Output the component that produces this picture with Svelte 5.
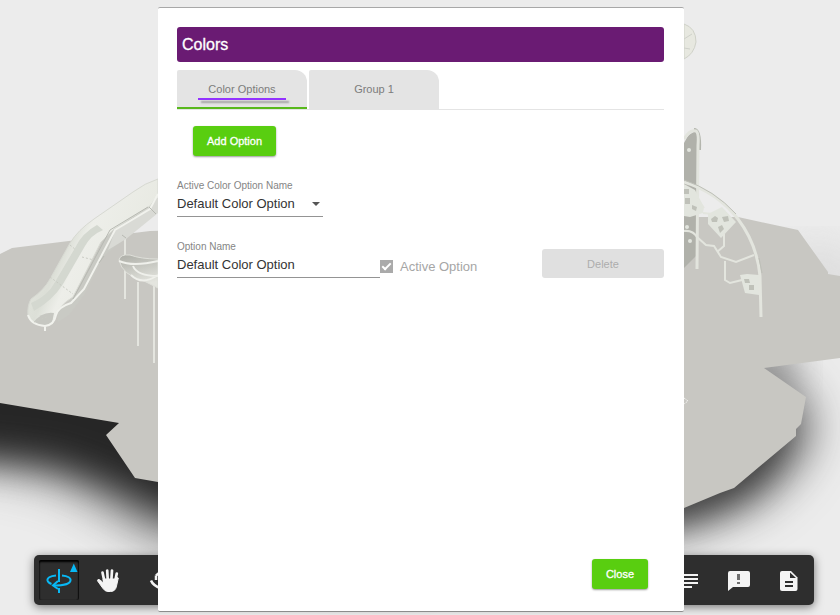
<script>
  let tab = $state('options');
  let active = $state('Default Color Option');
  let optionName = $state('Default Color Option');
  const tabs = [
    { id: 'options', label: 'Color Options' },
    { id: 'group1', label: 'Group 1' }
  ];
</script>

<main>
  <svg class="scene" viewBox="0 0 840 615" preserveAspectRatio="xMidYMid slice" aria-hidden="true">
    <defs>
      <filter id="soft" color-interpolation-filters="sRGB" x="-40%" y="-60%" width="180%" height="220%"><feGaussianBlur stdDeviation="18" /></filter>
      <filter id="softer" color-interpolation-filters="sRGB" x="-60%" y="-60%" width="220%" height="220%"><feGaussianBlur stdDeviation="24" /></filter>
      <linearGradient id="slide" x1="0" y1="0" x2="1" y2="0.5">
        <stop offset="0.15" stop-color="#e6e8e1" /><stop offset="0.42" stop-color="#dcdfd7" />
        <stop offset="0.52" stop-color="#edeee9" /><stop offset="1" stop-color="#e6e8e0" />
      </linearGradient>
      <linearGradient id="cup" x1="0" y1="0" x2="0.3" y2="1">
        <stop offset="0" stop-color="#adaea7" /><stop offset="1" stop-color="#e4e5df" />
      </linearGradient>
    </defs>
    <rect width="840" height="615" fill="#ececec" />
    <path filter="url(#softer)" fill="#555" opacity="0.6" d="M-80 320 L120 360 L420 450 L420 570 L160 546 Q110 512 60 484 L0 470 L-80 460Z" />
    <path filter="url(#soft)" fill="#262626" d="M-80 320 L120 360 L420 450 L420 530 L160 512 Q110 482 50 464 L0 458 L-80 452Z" />
    <path filter="url(#softer)" fill="#333" d="M400 450 L690 440 L735 415 L775 380 L808 415 Q805 465 745 502 L680 526 L400 540Z" />
    <path filter="url(#soft)" fill="#444" opacity="0.8" d="M400 460 L690 450 L735 425 L760 420 L770 450 Q755 480 730 495 L680 515 L400 525Z" />
    <path filter="url(#soft)" fill="#555" opacity="0.6" d="M725 340 L790 350 L795 385 L745 395Z" />
    <path filter="url(#softer)" fill="#ccc" d="M790 250 L860 270 L860 290 L800 290Z" />
    <path fill="#c8c7c2" d="M0 254 L12 248 L150 231 L684 217 L738 217 L798 230 L828 272 L828 274 L840 276 L840 358 L764 368 L806 397 L801 424 L796 429 L796 436 L734 488 L720 493 L684 508 L158 482 L135 478 L106 435 L119 423 L0 403Z" />

    <g fill="none" stroke="#e4e5df" stroke-width="2">
      <path d="M125 235V299M138 282V346M154 278V363" />
    </g>
    <path fill="#c9cac4" d="M158 194 L153 211 L124 239 L103 257 L84 295 L69 315 L58 322 L57 312 L75 296 L107 234 L135 212Z" />
    <path fill="#d9dad5" d="M115 231 L152 205 L158 197 V213 L126 239 L108 250Z" />
    <path fill="url(#slide)" stroke="#d7d9d2" d="M158 179 Q145 183 133 192 L94 219 Q78 230 70 243 L50 279 Q44 290 31 299 Q27 306 28 316 Q34 325 45 326 L53 323 Q57 306 73 297 Q87 270 101 242 L114 229 L150 206 L158 195Z" />
    <path fill="#d4d8d0" d="M97 225 Q82 233 75 248 L55 282 Q48 296 31 303 L34 311 Q53 300 63 284 L85 246 Q91 235 103 230Z" />
    <path fill="#c6c7c1" d="M33 323 Q42 311 54 313 L52 323 L45 326Z" />
    <path fill="none" stroke="#f1f2ed" stroke-width="2" d="M28 315 Q31 325 45 326 Q54 325 56 315 Q58 307 71 303 L84 289 L115 230 L150 209 L158 194M45 326V331" />
    <path fill="none" stroke="#b7b9b2" stroke-width="1" d="M73 299 L110 230 L148 207M99 263l5-7M122 235l4 3M149 207l7 7" />
    <path fill="none" stroke="#c9cbc3" stroke-width="1" stroke-dasharray="2 2" d="M70 245 L76 250M82 257L94 260M50 277L73 294M34 322L49 316" />
    <path fill="url(#cup)" stroke="#dfe0da" d="M119 260 Q120 254 130 255 Q141 259 158 259 V288 L144 281 Q122 275 119 260Z" />
    <path fill="none" stroke="#eff0eb" stroke-width="2" d="M119 261 Q133 267 158 261M133 266 Q137 276 158 276M131 275 Q142 286 158 275" />

    <path fill="#e7e8e0" stroke="#cfd1c8" d="M684 24 Q696 28 696 42 Q694 54 684 59Z" />
    <path stroke="#cfd1ca" fill="none" d="M684 39l8-5M684 48l6 1" />
    <path fill="#b0b1aa" d="M684 143 Q689 132 697 131 L697 255 L684 268Z" />
    <path fill="none" stroke="#b4b6ae" stroke-width="2" d="M694 129 Q701 129 700 150" />
    <path fill="none" stroke="#e2e4dd" stroke-width="3" d="M684 139 Q690 129 696 131 Q699 133 698 145 L697 269" />
    <g fill="#e2e5de">
      <circle cx="689" cy="150" r="2" /><circle cx="687" cy="227" r="2" /><circle cx="690" cy="241" r="2" />
      <path d="M684 184 L695 190 L704 207 L703 213 L690 217 L684 216Z" />
      <path d="M708 214 L722 207 L736 222 L721 238 L708 224Z" />
      <path d="M740 275 L747 274 L759 275 L759 295 L745 293Z" />
    </g>
    <g fill="#bfc1b9">
      <path d="M684 189h5v5h-5zM685 198h5v6h-5zM692 205l5 2-1 4-4-2zM711 219l4-3 3 2-1 4h-5zM722 217l6-1 1 5-5 1zM718 227l4-2 2 4-4 4zM744 279h5l1 4h-5zM749 285h5v5h-5z" />
    </g>
    <g fill="none" stroke="#e3e5de">
      <path stroke-width="2" d="M684 231 Q693 230 697 237 L706 245 L714 246 L721 257 L736 262 L754 255M717 252 L724 246V234M725 261V280L730 283L742 280M697 199L704 208M703 213L712 214" />
      <path stroke-width="3" d="M684 182 Q717 192 738 219 Q757 244 760 276 L761 317" />
    </g>
    <path fill="none" stroke="#bdbfb7" d="M684 180 Q714 190 736 214M759 258l3 15" />
    <path fill="none" stroke="#f2f2ef" stroke-dasharray="2 1" d="M684 398l4 3-4 3" />
  </svg>

  <div class="toolbar" role="toolbar" aria-label="View tools">
    <div class="tools">
      <button class="tool pressed" aria-label="Orbit" aria-pressed="true">
        <svg width="40" height="40" viewBox="0 0 40 40" fill="none" stroke="#08b8f5" stroke-width="2">
          <path d="M20 9V22M20 28V33" />
          <path d="M17 15.5C11 16 8 18 8.5 20.5C9 22.5 11 23.5 12.5 24M23 15.5C29 16 32 18 31.5 20.5C31 24 24 25.5 15 25.5" />
          <path d="M19 21L14 25.5L19 29" />
          <path d="M31 12H38.500L34.800 3.500Z" fill="#08b8f5" stroke="none" />
        </svg>
      </button>
      <button class="tool" aria-label="Pan">
        <svg width="40" height="40" viewBox="0 0 40 40" fill="none" stroke="#f4f4f4" stroke-linecap="round" stroke-linejoin="round">
          <path stroke-width="2.7" d="M15.5 22L13.500 12.500M18.800 21L18.200 10.500M22.300 21L23 10.500M26 22L27.800 13.500" />
          <path fill="#f4f4f4" stroke-width="1" d="M14.500 19H27L28.200 17.500L29.300 18L27.500 26Q26.500 31.500 21.500 31.500H19Q16 31.500 14 28.500L8.500 20.800Q8.500 19.200 10 19.500Q11.500 20 14.500 23Z" />
        </svg>
      </button>
      <button class="tool" aria-label="Rotate">
        <svg width="40" height="40" viewBox="0 0 40 40" fill="none" stroke="#f4f4f4" stroke-width="2.500">
          <path d="M22 11.500L17 15.500M17 15.500V20M12 20.500Q14 25.500 22 28.500" />
        </svg>
      </button>
    </div>
    <div class="tools">
      <button class="tool" aria-label="Parts list">
        <svg width="40" height="40" viewBox="0 0 40 40" fill="#f4f4f4">
          <path d="M10 14H29V16H10ZM10 18H29V20H10ZM10 22H29V24H10ZM10 26H23V28H10Z" />
        </svg>
      </button>
      <button class="tool" aria-label="Messages">
        <svg width="40" height="40" viewBox="0 0 40 40">
          <path fill="#f4f4f4" d="M11 11H29Q31 11 31 13V25Q31 27 29 27H14L9 31V13Q9 11 11 11Z" />
          <path fill="#6f6f6f" d="M18 14H21V20H18ZM18 22H21V24H18Z" />
        </svg>
      </button>
      <button class="tool" aria-label="Document">
        <svg width="40" height="40" viewBox="0 0 40 40">
          <path fill="#f4f4f4" d="M13 11H22L28.500 17.500V29Q28.500 31 26.500 31H13Q11 31 11 29V13Q11 11 13 11Z" />
          <path fill="#2e2e2e" d="M21 12.500V18H27ZM16 21H24V23H16ZM16 25H24V27H16Z" />
        </svg>
      </button>
    </div>
  </div>

  <div class="dialog" role="dialog" aria-labelledby="title">
    <h1 id="title">Colors</h1>
    <div class="tabs" role="tablist">
      {#each tabs as t}
        <button class="tab" class:selected={tab === t.id} role="tab" aria-selected={tab === t.id} onclick={() => (tab = t.id)}>
          <span>{t.label}</span>
        </button>
      {/each}
    </div>
    <button class="btn add">Add Option</button>

    <div class="field picker">
      <label for="active-name">Active Color Option Name</label>
      <div class="select">
        <select id="active-name" bind:value={active}>
          <option>Default Color Option</option>
        </select>
        <svg width="8" height="4" viewBox="0 0 8 4" aria-hidden="true"><path fill="#555" d="M0 0H8L4 4Z" /></svg>
      </div>
    </div>

    <div class="row">
      <div class="field name">
        <label for="option-name">Option Name</label>
        <input id="option-name" type="text" bind:value={optionName} />
      </div>
      <label class="check">
        <input type="checkbox" checked disabled />
        Active Option
      </label>
      <button class="btn delete" disabled>Delete</button>
    </div>

    <div class="actions"><button class="btn">Close</button></div>
  </div>
</main>

<style>
  :global(body) { margin: 0; }
  main, button, input, select { font-family: "Liberation Sans", Arial, sans-serif; }
  main {
    position: relative;
    box-sizing: border-box;
    min-height: 100vh;
    padding: 7px 0 3px 2px;
    display: flex;
    justify-content: center;
    overflow: hidden;
    background: #ececec;
  }
  button { border: 0; padding: 0; cursor: pointer; }
  .scene { position: absolute; inset: 0; width: 100%; height: 100%; }
  .toolbar {
    position: absolute;
    left: 34px;
    right: 26px;
    bottom: 10px;
    box-sizing: border-box;
    height: 50px;
    padding: 5px;
    display: flex;
    justify-content: space-between;
    border-radius: 5px;
    background: #2e2e2e;
    box-shadow: 0 2px 10px rgba(0, 0, 0, 0.5);
  }
  .tools { display: flex; gap: 10px; }
  .tool { width: 40px; height: 40px; background: none; border-radius: 2px; }
  .tool svg { display: block; }
  .pressed { box-shadow: inset 0 2px 2px #000, inset -1px 0 1px #161616, inset 1px 0 1px #222; }

  .dialog {
    position: relative;
    box-sizing: border-box;
    width: 526px;
    max-width: 100%;
    padding: 19px 20px 22px 19px;
    display: flex;
    flex-direction: column;
    border-top: 1px solid #a8a8a8;
    border-bottom: 1px solid #8c8c8c;
    border-radius: 2px;
    background: #fff;
  }
  h1 {
    margin: 0 0 8px;
    padding: 1px 5px 0;
    border-radius: 3px;
    background: #6a1b73;
    color: #fff;
    font-size: 16px;
    font-weight: 400;
    line-height: 34px;
    -webkit-text-stroke: 0.3px currentColor;
  }
  .tabs { display: flex; gap: 2px; border-bottom: 1px solid #e4e4e4; }
  .tab {
    width: 130px;
    height: 39px;
    box-sizing: border-box;
    border-bottom: 2px solid #e4e4e4;
    border-radius: 2px 12px 0 0;
    background: #e4e4e4;
    color: #7c7c7c;
    font-size: 11px;
    line-height: 16px;
  }
  .tab span { position: relative; }
  .selected { border-bottom-color: #58b81c; }
  .selected span::after {
    content: "";
    position: absolute;
    left: -10px;
    right: -10px;
    bottom: -5px;
    height: 2px;
    background: #9333ff;
    box-shadow: 3px 3px 2px rgba(0, 0, 0, 0.3);
  }
  .btn {
    height: 30px;
    padding: 0 14px;
    border-radius: 3px;
    background: #59ce10;
    color: #fff;
    font-size: 11px;
    -webkit-text-stroke: 0.3px currentColor;
    box-shadow: 0 1px 2px rgba(0, 0, 0, 0.4);
  }
  .add { align-self: flex-start; margin: 16px 0 24px 16px; }
  .field { display: flex; flex-direction: column; }
  .field label { color: #858585; font-size: 10px; line-height: 12px; }
  .field input, select {
    box-sizing: border-box;
    width: 100%;
    height: 25px;
    padding: 0 0 2px;
    border: 0;
    border-bottom: 1px solid #949494;
    border-radius: 0;
    background: transparent;
    color: #333;
    font-size: 13px;
    appearance: none;
    outline: 0;
  }
  .picker { width: 146px; }
  .select { display: flex; align-items: center; }
  .select svg { flex: none; margin: 0 3px 2px -11px; pointer-events: none; }
  .row { display: flex; align-items: flex-end; margin-top: 24px; }
  .name { width: 203px; }
  .check { display: flex; align-items: center; gap: 7px; height: 23px; color: #a6a6a6; font-size: 13px; }
  .check input {
    appearance: none;
    width: 13px;
    height: 13px;
    margin: 0;
    display: grid;
    place-items: center;
    background: #aaa;
  }
  .check input::after {
    content: "";
    width: 3px;
    height: 7px;
    margin-bottom: 2px;
    border: solid #fff;
    border-width: 0 2px 2px 0;
    transform: rotate(45deg);
  }
  .delete {
    width: 122px;
    height: 29px;
    margin-left: auto;
    background: #e0e0e0;
    color: #adadad;
    box-shadow: none;
    -webkit-text-stroke: 0;
    cursor: default;
  }
  .actions { display: flex; justify-content: flex-end; margin-top: auto; padding-right: 16px; }
</style>
